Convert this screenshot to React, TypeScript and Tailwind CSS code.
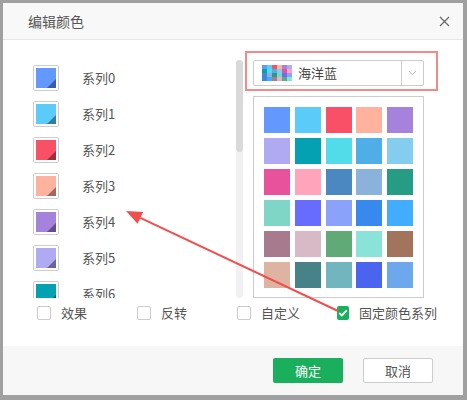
import React from 'react';

const palette = [
  '#6398ff', '#5bcbf9', '#f95068', '#ffb39e', '#a582db',
  '#afaaf2', '#04a1b3', '#52dcea', '#4faee8', '#84cdee',
  '#e8529c', '#ffa4ba', '#4b87c0', '#8ab2db', '#269c84',
  '#7fd6c6', '#676cff', '#8aa2fa', '#3789ee', '#42acff',
  '#a77a8d', '#d8b9c6', '#5faa77', '#8ae3d9', '#a2745b',
  '#ddb3a2', '#468287', '#72b5bf', '#4b64ef', '#6da7ec',
];

const series = [
  { name: '系列0', color: '#6398ff', dark: '#3b5da6' },
  { name: '系列1', color: '#5bcbf9', dark: '#357d9c' },
  { name: '系列2', color: '#f95068', dark: '#98303f' },
  { name: '系列3', color: '#ffb39e', dark: '#9c6b5e' },
  { name: '系列4', color: '#a582db', dark: '#634e86' },
  { name: '系列5', color: '#afaaf2', dark: '#6a6795' },
  { name: '系列6', color: '#04a1b3', dark: '#02606b' },
];

const options = [
  { label: '效果', checked: false },
  { label: '反转', checked: false },
  { label: '自定义', checked: false },
  { label: '固定颜色系列', checked: true },
];

function Swatch({ color, dark }: { color: string; dark: string }) {
  return (
    <div className="w-[26px] h-[26px] shrink-0 border border-[#cccccc] rounded-[2px] p-[2px] bg-white">
      <svg width="20" height="20" viewBox="0 0 20 20" className="block">
        <rect width="20" height="20" fill={color} />
        <polygon points="20,11 20,20 11,20" fill={dark} />
      </svg>
    </div>
  );
}

export default function App() {
  return (
    <div className="relative w-[467px] h-[400px] bg-[#a0a0a0] pt-[3px] pl-[3px] overflow-hidden font-['Noto_Sans_CJK_SC',sans-serif]">
      <div className="w-[460px] h-[392px] bg-white flex flex-col">
        {/* header */}
        <div className="h-[37px] shrink-0 bg-[#f8f8f8] border-b border-[#e6e6e6] flex items-center justify-between pl-[25px] pr-[13px]">
          <span className="text-[14px] text-[#555555]">编辑颜色</span>
          <svg width="11" height="11" viewBox="0 0 11 11" className="mt-[1px]">
            <path d="M1 1 L10 10 M10 1 L1 10" stroke="#666666" strokeWidth="1.2" />
          </svg>
        </div>

        {/* body */}
        <div className="flex pt-[20px] pl-[30px] gap-[10px] h-[258px] shrink-0">
          <div className="w-[210px] h-[238px] flex">
            <div className="flex-1 overflow-hidden pt-[5px] flex flex-col gap-[10px]">
              {series.map((s) => (
                <div key={s.name} className="flex items-center gap-[23px] h-[26px] shrink-0">
                  <Swatch color={s.color} dark={s.dark} />
                  <span className="text-[13px] text-[#555555]">{s.name}</span>
                </div>
              ))}
            </div>
            <div className="w-[7px] h-[238px] bg-[#f1f1f3] rounded-full">
              <div className="h-[92px] bg-[#d9d9d9] rounded-full" />
            </div>
          </div>

          <div className="w-[171px] flex flex-col gap-[10px]">
            <div className="h-[26px] border border-[#cccccc] rounded-[2px] flex items-center">
              <div className="flex-1 flex items-center pl-[8px] gap-[6px]">
                <div className="grid grid-cols-6 w-[30px] h-[16px]">
                  {palette.slice(0, 24).map((c, i) => (
                    <svg key={i} width="5" height="4" className="block">
                      <rect width="5" height="4" fill={c} />
                    </svg>
                  ))}
                </div>
                <span className="text-[13px] text-[#444444]">海洋蓝</span>
              </div>
              <div className="w-[22px] h-full border-l border-[#cccccc] flex items-center justify-center">
                <svg width="9" height="6" viewBox="0 0 9 6">
                  <path d="M1 1 L4.5 4.5 L8 1" fill="none" stroke="#bbbbbb" strokeWidth="1" />
                </svg>
              </div>
            </div>
            <div className="h-[202px] border border-[#cccccc] p-[10px] grid grid-cols-5 gap-[5px] content-start">
              {palette.map((c, i) => (
                <svg key={i} width="26" height="26" className="block">
                  <rect width="26" height="26" fill={c} />
                </svg>
              ))}
            </div>
          </div>
        </div>

        {/* options */}
        <div className="flex pl-[34px] mt-[8px] h-[14px] items-center">
          {options.map((o) => (
            <div key={o.label} className="w-[100px] flex items-center gap-[10px]">
              {o.checked ? (
                <div className="w-[14px] h-[14px] rounded-[2px] bg-[#1aaf5d] flex items-center justify-center">
                  <svg width="10" height="8" viewBox="0 0 10 8">
                    <path d="M1.2 4 L3.8 6.4 L8.8 1.4" fill="none" stroke="#ffffff" strokeWidth="1.8" />
                  </svg>
                </div>
              ) : (
                <div className="w-[14px] h-[14px] rounded-[2px] border border-[#cccccc] bg-white" />
              )}
              <span className="text-[13px] text-[#555555] whitespace-nowrap">{o.label}</span>
            </div>
          ))}
        </div>

        {/* footer */}
        <div className="mt-auto h-[49px] bg-[#f7f7f7] flex items-center justify-end gap-[20px] pr-[30px]">
          <button className="w-[70px] h-[25px] rounded-[2px] bg-[#1aaf5d] text-white text-[13px]">确定</button>
          <button className="w-[70px] h-[25px] rounded-[2px] bg-white border border-[#cccccc] text-[#555555] text-[13px]">取消</button>
        </div>
      </div>

      {/* annotation: highlight box */}
      <div className="absolute left-[245px] top-[51px] w-[193px] h-[40px] border-2 border-[#f38a8a] pointer-events-none" />

      {/* annotation: arrow */}
      <svg className="absolute left-0 top-0 pointer-events-none" width="467" height="400" viewBox="0 0 467 400">
        <line x1="338" y1="311" x2="140.4" y2="217.9" stroke="#f24e4e" strokeWidth="2" />
        <polygon points="126,211 143.2,212 137.6,223.8" fill="#f24e4e" />
      </svg>
    </div>
  );
}
